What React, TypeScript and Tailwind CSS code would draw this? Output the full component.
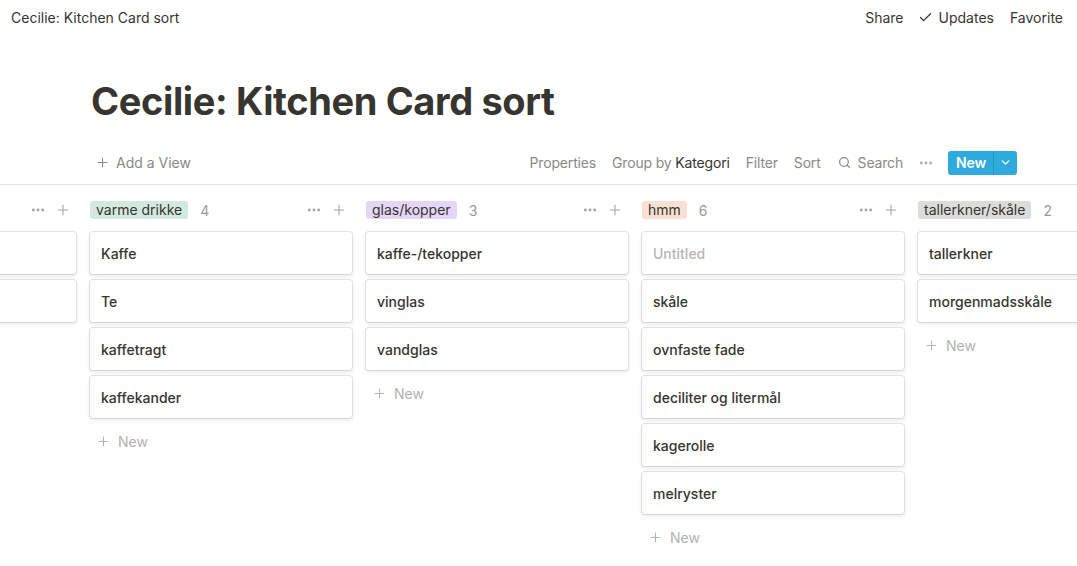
import { Check, ChevronDown, MoreHorizontal, Plus, Search } from 'lucide-react';

type Column = {
  name: string;
  tag: string;
  count?: number;
  cards: string[];
};

const columns: Column[] = [
  { name: '', tag: '', cards: ['', ''] },
  { name: 'varme drikke', tag: 'bg-[#d3e9e0]', count: 4, cards: ['Kaffe', 'Te', 'kaffetragt', 'kaffekander'] },
  { name: 'glas/kopper', tag: 'bg-[#e5d5f6]', count: 3, cards: ['kaffe-/tekopper', 'vinglas', 'vandglas'] },
  {
    name: 'hmm',
    tag: 'bg-[#fcdfd3]',
    count: 6,
    cards: ['Untitled', 'skåle', 'ovnfaste fade', 'deciliter og litermål', 'kagerolle', 'melryster'],
  },
  { name: 'tallerkner/skåle', tag: 'bg-[#dcdcda]', count: 2, cards: ['tallerkner', 'morgenmadsskåle'] },
];

function BoardColumn({ column, first }: { column: Column; first?: boolean }) {
  return (
    <div className="w-[262px] shrink-0">
      {/* Column header */}
      <div className="flex h-[18px] items-center mb-[13px]">
        {column.name && (
          <>
            <span className={`${column.tag} rounded-[3px] px-[6px] leading-[18px] text-[14px] text-[#37352f]`}>
              {column.name}
            </span>
            <span className="ml-[12px] text-[14px] text-[#9b9a97]">{column.count}</span>
          </>
        )}
        <div className="ml-auto mr-[5px] flex items-center gap-[9px] text-[#a5a4a1]">
          <MoreHorizontal size={16} strokeWidth={2.4} />
          <Plus size={16} strokeWidth={1.6} />
        </div>
      </div>

      {/* Cards */}
      <div className="flex flex-col gap-[6px]">
        {column.cards.map((card, i) => (
          <div
            key={i}
            className="flex h-[42px] items-center rounded-[3px] bg-white px-[11px] text-[14px] font-medium shadow-[0_0_0_1px_rgba(15,15,15,0.1),0_2px_4px_rgba(15,15,15,0.1)]"
          >
            <span className={card === 'Untitled' ? 'text-[#b7b6b3]' : 'text-[#37352f]'}>{card}</span>
          </div>
        ))}
        {!first && (
          <div className="flex h-[34px] items-center gap-[7px] px-[6px] text-[14px] text-[#b3b2af]">
            <Plus size={15} strokeWidth={1.6} />
            <span>New</span>
          </div>
        )}
      </div>
    </div>
  );
}

export default function App() {
  return (
    <div
      className="h-[566px] w-[1077px] overflow-hidden bg-white text-[#37352f]"
      style={{ fontFamily: 'Inter, "Noto Sans", sans-serif' }}
    >
      {/* Top bar */}
      <div className="flex h-[34px] items-center pl-[11px] pr-[14px] text-[14px]">
        <span>Cecilie: Kitchen Card sort</span>
        <div className="ml-auto flex items-center">
          <span>Share</span>
          <span className="ml-[14px] flex items-center gap-[6px]">
            <Check size={15} strokeWidth={2} />
            Updates
          </span>
          <span className="ml-[16px]">Favorite</span>
        </div>
      </div>

      {/* Title */}
      <div className="mt-[43px] pl-[91px]">
        <h1 className="text-[38px] font-bold leading-[48px] tracking-[-0.01em] text-[#37352f]">
          Cecilie: Kitchen Card sort
        </h1>
      </div>

      {/* Toolbar */}
      <div className="mt-[16px] flex h-[44px] items-center border-b border-[#e3e3e1] pl-[95px] pr-[60px] text-[14px] text-[#8a8985]">
        <div className="flex items-center gap-[6px]">
          <Plus size={15} strokeWidth={1.6} />
          <span>Add a View</span>
        </div>
        <div className="ml-auto flex items-center tracking-[-0.012em]">
          <span>Properties</span>
          <span className="ml-[16px]">
            Group by <span className="text-[#37352f]">Kategori</span>
          </span>
          <span className="ml-[16px]">Filter</span>
          <span className="ml-[16px]">Sort</span>
          <span className="ml-[17px] flex items-center gap-[7px]">
            <Search size={13} strokeWidth={2.2} />
            Search
          </span>
          <MoreHorizontal size={16} strokeWidth={2.4} className="ml-[15px] text-[#b0afac]" />
          <div className="ml-[14px] flex h-[24px] items-center rounded-[3px] bg-[#2eaadc] text-white">
            <span className="pl-[8px] pr-[7px] font-semibold">New</span>
            <span className="flex h-full w-[24px] items-center justify-center border-l border-[#2196c4]">
              <ChevronDown size={13} strokeWidth={2.4} />
            </span>
          </div>
        </div>
      </div>

      {/* Board */}
      <div className="flex gap-[14px] pt-[16px] -ml-[186px]">
        {columns.map((column, i) => (
          <BoardColumn key={i} column={column} first={i === 0} />
        ))}
      </div>
    </div>
  );
}
